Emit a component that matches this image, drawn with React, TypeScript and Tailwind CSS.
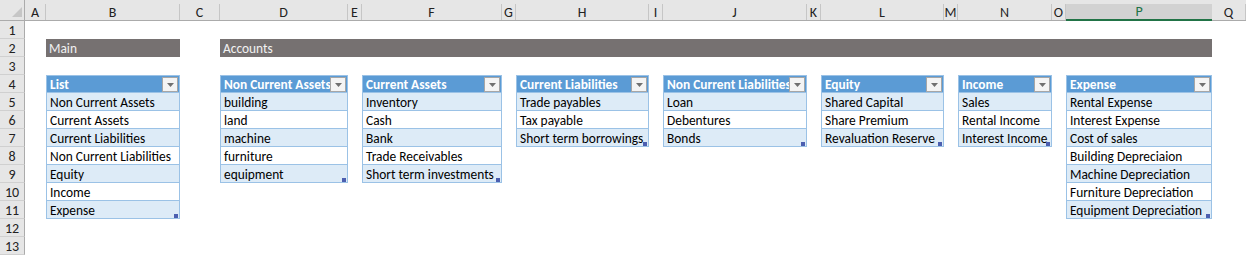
import React from "react";

type Table = { col: string; title: string; items: string[] };

const letters = ["A", "B", "C", "D", "E", "F", "G", "H", "I", "J", "K", "L", "M", "N", "O", "P", "Q"];

const tables: Table[] = [
  {
    col: "col-start-3",
    title: "List",
    items: ["Non Current Assets", "Current Assets", "Current Liabilities", "Non Current Liabilities", "Equity", "Income", "Expense"],
  },
  { col: "col-start-5", title: "Non Current Assets", items: ["building", "land", "machine", "furniture", "equipment"] },
  { col: "col-start-7", title: "Current Assets", items: ["Inventory", "Cash", "Bank", "Trade Receivables", "Short term investments"] },
  { col: "col-start-9", title: "Current Liabilities", items: ["Trade payables", "Tax payable", "Short term borrowings"] },
  { col: "col-start-11", title: "Non Current Liabilities", items: ["Loan", "Debentures", "Bonds"] },
  { col: "col-start-13", title: "Equity", items: ["Shared Capital", "Share Premium", "Revaluation Reserve"] },
  { col: "col-start-15", title: "Income", items: ["Sales", "Rental Income", "Interest Income"] },
  {
    col: "col-start-17",
    title: "Expense",
    items: ["Rental Expense", "Interest Expense", "Cost of sales", "Building Depreciaion", "Machine Depreciation", "Furniture Depreciation", "Equipment Depreciation"],
  },
];

const spans: Record<number, string> = {
  4: "row-span-4",
  6: "row-span-6",
  8: "row-span-8",
};

function FilterButton() {
  return (
    <div className="absolute right-[1px] top-[1px] w-[16px] h-[15px] bg-[#f4f4f4] border border-[#a6a6a6] flex items-center justify-center">
      <svg width="7" height="4" viewBox="0 0 7 4">
        <path d="M0 0 L7 0 L3.5 4 Z" fill="#707070" />
      </svg>
    </div>
  );
}

function ListTable({ t }: { t: Table }) {
  return (
    <div className={`${t.col} row-start-5 ${spans[t.items.length + 1]} relative self-start flex flex-col border-x border-t border-[#9bc2e6]`}>
      <div className="relative h-[17px] bg-[#5b9bd5] border-b border-[#9bc2e6] text-white font-bold px-[3px] pt-[1px] leading-[16px] whitespace-nowrap overflow-hidden">
        {t.title}
        <FilterButton />
      </div>
      {t.items.map((it, i) => (
        <div
          key={it}
          className={`h-[18px] border-b border-[#9bc2e6] px-[3px] pt-[1px] leading-[17px] whitespace-nowrap overflow-hidden text-black ${i % 2 === 0 ? "bg-[#ddebf7]" : "bg-white"}`}
        >
          {it}
        </div>
      ))}
      <div className="absolute right-[1px] bottom-[1px] w-[4px] h-[4px] bg-[#4c5fb0]" />
    </div>
  );
}

export default function App() {
  return (
    <div
      className="w-[1246px] h-[256px] bg-white overflow-hidden text-[13.4px]"
      style={{ fontFamily: "Carlito, Lato, 'Liberation Sans', sans-serif" }}
    >
      <div className="grid grid-cols-[25px_21px_134px_40px_128px_14px_140px_14px_133px_14px_144px_14px_123px_14px_94px_14px_146px_34px] grid-rows-[21px_repeat(13,18px)]">
        {/* corner */}
        <div className="relative bg-[#e6e6e6] border-r border-b border-[#ababab]">
          <svg className="absolute left-[12px] top-[7px]" width="10" height="10" viewBox="0 0 10 10">
            <path d="M10 0 L10 10 L0 10 Z" fill="#c6c6c6" />
          </svg>
        </div>
        {/* column headers */}
        {letters.map((l) => (
          <div
            key={l}
            className={`pt-[4px] text-[14px] ${l === "P" ? "bg-[#e6e6e6]" : "bg-[#e6e6e6] border-b border-[#ababab]"}`}
          >
            <div
              className={`h-full flex items-center justify-center leading-none pt-[1px] ${
                l === "P"
                  ? "bg-[#d2d2d2] text-[#217346] border-b-2 border-[#217346]"
                  : "border-r border-[#c6c6c6] text-[#222]"
              }`}
            >
              {l}
            </div>
          </div>
        ))}

        {/* row headers */}
        {Array.from({ length: 13 }, (_, i) => (
          <div
            key={i}
            className="col-start-1 bg-[#e6e6e6] border-r border-b border-[#ababab] border-b-[#d0d0d0] flex items-center justify-center pt-[1px] text-[14px] text-[#222]"
            style={{ gridRowStart: i + 2 }}
          >
            {i + 1}
          </div>
        ))}

        {/* section bands */}
        <div className="col-start-3 row-start-3 bg-[#767171] text-[#f2f2f2] px-[3px] pt-[1px] leading-[18px]">Main</div>
        <div className="col-start-5 col-end-18 row-start-3 bg-[#767171] text-[#f2f2f2] px-[3px] pt-[1px] leading-[18px]">Accounts</div>

        {tables.map((t) => (
          <ListTable key={t.title} t={t} />
        ))}
      </div>
    </div>
  );
}
